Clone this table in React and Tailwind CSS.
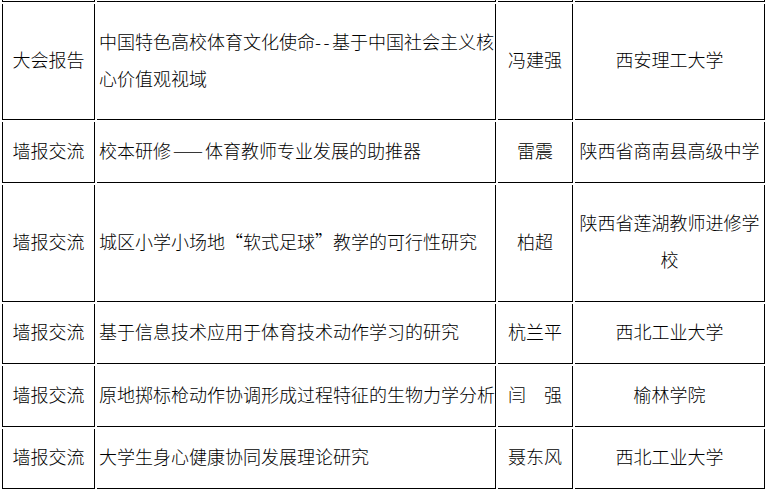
import React from "react";

const rows = [
  {
    type: "大会报告",
    title: [
      <>
        中国特色高校体育文化使命<span className="tracking-[2.5px]">--</span>基于中国社会主义核
      </>,
      "心价值观视域",
    ],
    name: "冯建强",
    org: ["西安理工大学"],
  },
  {
    type: "墙报交流",
    title: [
      <>
        校本研修<span className="px-[2px]">——</span>体育教师专业发展的助推器
      </>,
    ],
    name: "雷震",
    org: ["陕西省商南县高级中学"],
  },
  {
    type: "墙报交流",
    title: ["城区小学小场地“软式足球”教学的可行性研究"],
    name: "柏超",
    org: ["陕西省莲湖教师进修学", "校"],
  },
  {
    type: "墙报交流",
    title: ["基于信息技术应用于体育技术动作学习的研究"],
    name: "杭兰平",
    org: ["西北工业大学"],
  },
  {
    type: "墙报交流",
    title: ["原地掷标枪动作协调形成过程特征的生物力学分析"],
    name: "闫　强",
    org: ["榆林学院"],
  },
  {
    type: "墙报交流",
    title: ["大学生身心健康协同发展理论研究"],
    name: "聂东风",
    org: ["西北工业大学"],
  },
];

const cell = "border-r border-b border-black flex items-center pb-[4px]";

const Lines = ({ lines }) =>
  lines.map((l, i) => (
    <React.Fragment key={i}>
      {i > 0 && <br />}
      {l}
    </React.Fragment>
  ));

export default function App() {
  return (
    <div
      className="bg-white text-black text-[18px] leading-[37px] font-light"
      style={{ fontFamily: '"Noto Sans CJK SC", sans-serif' }}
    >
      <div className="grid grid-cols-[93px_399px_75px_190px] grid-rows-[2px_116px_61px_117px_60px_61px_60px] gap-[2px] pl-[2px]">
        {/* tail of the row above */}
        <div className="border-l border-r border-b border-black" />
        <div className="border-r border-b border-black" />
        <div className="border-r border-b border-black" />
        <div className="border-r border-b border-black" />

        {rows.map((r, i) => (
          <React.Fragment key={i}>
            <div className={`${cell} border-l justify-center`}>{r.type}</div>
            <div className={`${cell} pl-[2px]`}>
              <div className="whitespace-nowrap">
                <Lines lines={r.title} />
              </div>
            </div>
            <div className={`${cell} justify-center whitespace-pre`}>{r.name}</div>
            <div className={`${cell} justify-center text-center`}>
              <div>
                <Lines lines={r.org} />
              </div>
            </div>
          </React.Fragment>
        ))}
      </div>
    </div>
  );
}
